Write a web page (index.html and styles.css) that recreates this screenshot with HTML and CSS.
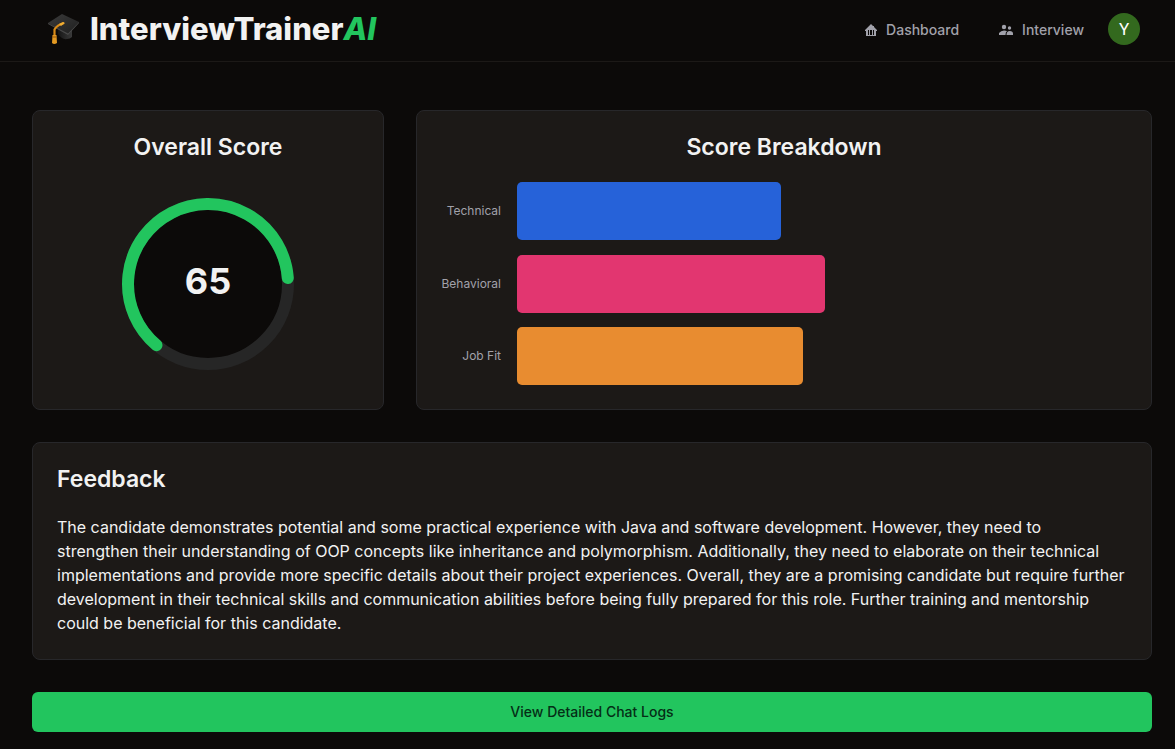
FILE: index.html
```html
<!DOCTYPE html>
<html lang="en">
<head>
<meta charset="utf-8">
<meta name="viewport" content="width=device-width, initial-scale=1">
<title>InterviewTrainerAI</title>
<link rel="stylesheet" href="styles.css">
</head>
<body>
<header class="site-header">
  <a class="brand" href="#">
    <svg class="brand-icon" viewBox="0 0 32 32" aria-hidden="true">
      <defs>
        <linearGradient id="board" x1="0" y1="0" x2="1" y2="1"><stop offset="0" stop-color="#3b3b3b"/><stop offset="1" stop-color="#1f1f1f"/></linearGradient>
        <linearGradient id="cap" x1="0" y1="0" x2="1" y2="0"><stop offset="0" stop-color="#151515"/><stop offset="1" stop-color="#3a3a3a"/></linearGradient>
      </defs>
      <path d="M10 15v6q4 6 9 5 3 0 5-2v-9z" fill="url(#cap)"/>
      <path d="M0 10 14 1 31 9 20 21z" fill="url(#board)"/>
      <path d="M0 10 20 20.500 31 9v1L20 22 0 11z" fill="#494949"/>
      <path d="M16 10Q9 12 6.500 16.500V24" fill="none" stroke="#d98b19" stroke-width="2.200"/>
      <path d="m11 11 4-2 2 1-4 3z" fill="#f0ad32"/>
      <path d="M4.500 22h4l.5 8q-3 2-5 0z" fill="#e49a22"/>
      <path d="M4.500 24h4" stroke="#9a560c"/>
    </svg>
    <span class="brand-name">InterviewTrainer<em>AI</em></span>
  </a>
  <nav class="nav">
    <a class="nav-link" href="#">
      <svg class="nav-icon" viewBox="0 0 12 12" aria-hidden="true"><path fill-rule="evenodd" d="M6 0 8 2h1v1l3 3v1h-1v5H1V7H0V6zM3 6v5h1V6zm2 0v5h2V6zm3 0v5h1V6z"/></svg>
      Dashboard
    </a>
    <a class="nav-link" href="#">
      <svg class="nav-icon people" viewBox="0 0 14 12" aria-hidden="true"><circle cx="5" cy="3" r="2.200"/><circle cx="10.500" cy="4" r="1.700"/><path d="M0 11V9q2-2.500 5-2.500 2 0 3 .7Q6.500 8 6.500 11zM7.500 11q0-4 3.200-4Q14 7 14 9.500V11z"/></svg>
      Interview
    </a>
    <button class="avatar" type="button" aria-label="Account">Y</button>
  </nav>
</header>
<main class="content">
  <div class="scores">
    <section class="card">
      <h2 class="card-title centered">Overall Score</h2>
      <svg class="gauge" viewBox="0 0 172 172" role="img" aria-label="Overall score 65">
        <circle class="gauge-track" cx="86" cy="86" r="80"/>
        <path class="gauge-value" d="M34.500 147.200A80 80 0 1 1 165.800 80"/>
        <text class="gauge-text" x="86" y="96">65</text>
      </svg>
    </section>
    <section class="card breakdown">
      <h2 class="card-title centered">Score Breakdown</h2>
      <div class="chart">
        <span class="label">Technical</span><div class="track"><div class="bar technical" style="width:43.28%"></div></div>
        <span class="label">Behavioral</span><div class="track"><div class="bar behavioral" style="width:50.49%"></div></div>
        <span class="label">Job Fit</span><div class="track"><div class="bar job-fit" style="width:46.89%"></div></div>
      </div>
    </section>
  </div>
  <section class="card">
    <h2 class="card-title">Feedback</h2>
    <p class="feedback">The candidate demonstrates potential and some practical experience with Java and software development. However, they need to strengthen their understanding of OOP concepts like inheritance and polymorphism. Additionally, they need to elaborate on their technical implementations and provide more specific details about their project experiences. Overall, they are a promising candidate but require further development in their technical skills and communication abilities before being fully prepared for this role. Further training and mentorship could be beneficial for this candidate.</p>
  </section>
  <button class="logs" type="button">View Detailed Chat Logs</button>
</main>
</body>
</html>
```
FILE: styles.css
```css
* { box-sizing: border-box; }
body {
  margin: 0;
  background: #0c0a09;
  color: #f2f2f2;
  font: 16px/24px Inter, "Liberation Sans", sans-serif;
}
h2, p { margin: 0; }
a { color: inherit; text-decoration: none; }
button { border: 0; font-family: inherit; cursor: pointer; }

.site-header {
  display: flex;
  align-items: center;
  justify-content: space-between;
  height: 62px;
  padding: 0 35px 4px 48px;
  border-bottom: 1px solid #1c1917;
}
.brand { display: flex; align-items: center; gap: 10px; }
.brand-icon { width: 32px; height: 32px; }
.brand-name { font-size: 31px; line-height: 36px; font-weight: 800; }
.brand-name em { color: #22c55e; }
.nav { display: flex; align-items: center; gap: 24px; }
.nav-link {
  display: flex;
  align-items: center;
  gap: 9px;
  padding-top: 2px;
  color: #a1a1aa;
  font-size: 14px;
  line-height: 20px;
  font-weight: 500;
}
.nav-link:first-child { margin-right: 16px; }
.nav-icon { width: 12px; height: 12px; fill: currentColor; }
.nav-icon.people { width: 14px; }
.avatar {
  width: 32px;
  height: 32px;
  padding: 0;
  border-radius: 50%;
  background: #33691e;
  color: #fff;
  font: 17px/32px Roboto, sans-serif;
}

.content {
  display: flex;
  flex-direction: column;
  gap: 32px;
  padding: 48px 23px 16px 32px;
}
.scores { display: grid; grid-template-columns: repeat(3, 1fr); gap: 32px; }
.breakdown { grid-column: span 2; }
.card {
  padding: 24px;
  border: 1px solid #27272a;
  border-radius: 8px;
  background: #1c1917;
}
.card-title { font-size: 23px; line-height: 24px; font-weight: 600; }
.centered { text-align: center; }

.gauge { display: block; width: 172px; margin: 39px auto 15px; }
.gauge-track { fill: #0c0a09; stroke: #262626; stroke-width: 12; }
.gauge-value { fill: none; stroke: #22c55e; stroke-width: 12; stroke-linecap: round; }
.gauge-text { fill: #f2f2f2; font-size: 36px; font-weight: 700; text-anchor: middle; }

.chart {
  display: grid;
  grid-template-columns: 60px 1fr;
  column-gap: 16px;
  align-content: space-between;
  align-items: center;
  height: 203px;
  margin-top: 23px;
}
.label { color: #a1a1aa; font-size: 12px; line-height: 16px; text-align: right; }
.bar { height: 58px; border-radius: 5px; }
.technical { background: #2662d9; }
.behavioral { background: #e23670; }
.job-fit { background: #e88c30; }

.feedback { margin-top: 24px; }
.logs {
  width: 100%;
  height: 40px;
  border-radius: 6px;
  background: #22c55e;
  color: #052e16;
  font-size: 14px;
  line-height: 20px;
  font-weight: 500;
}
```
